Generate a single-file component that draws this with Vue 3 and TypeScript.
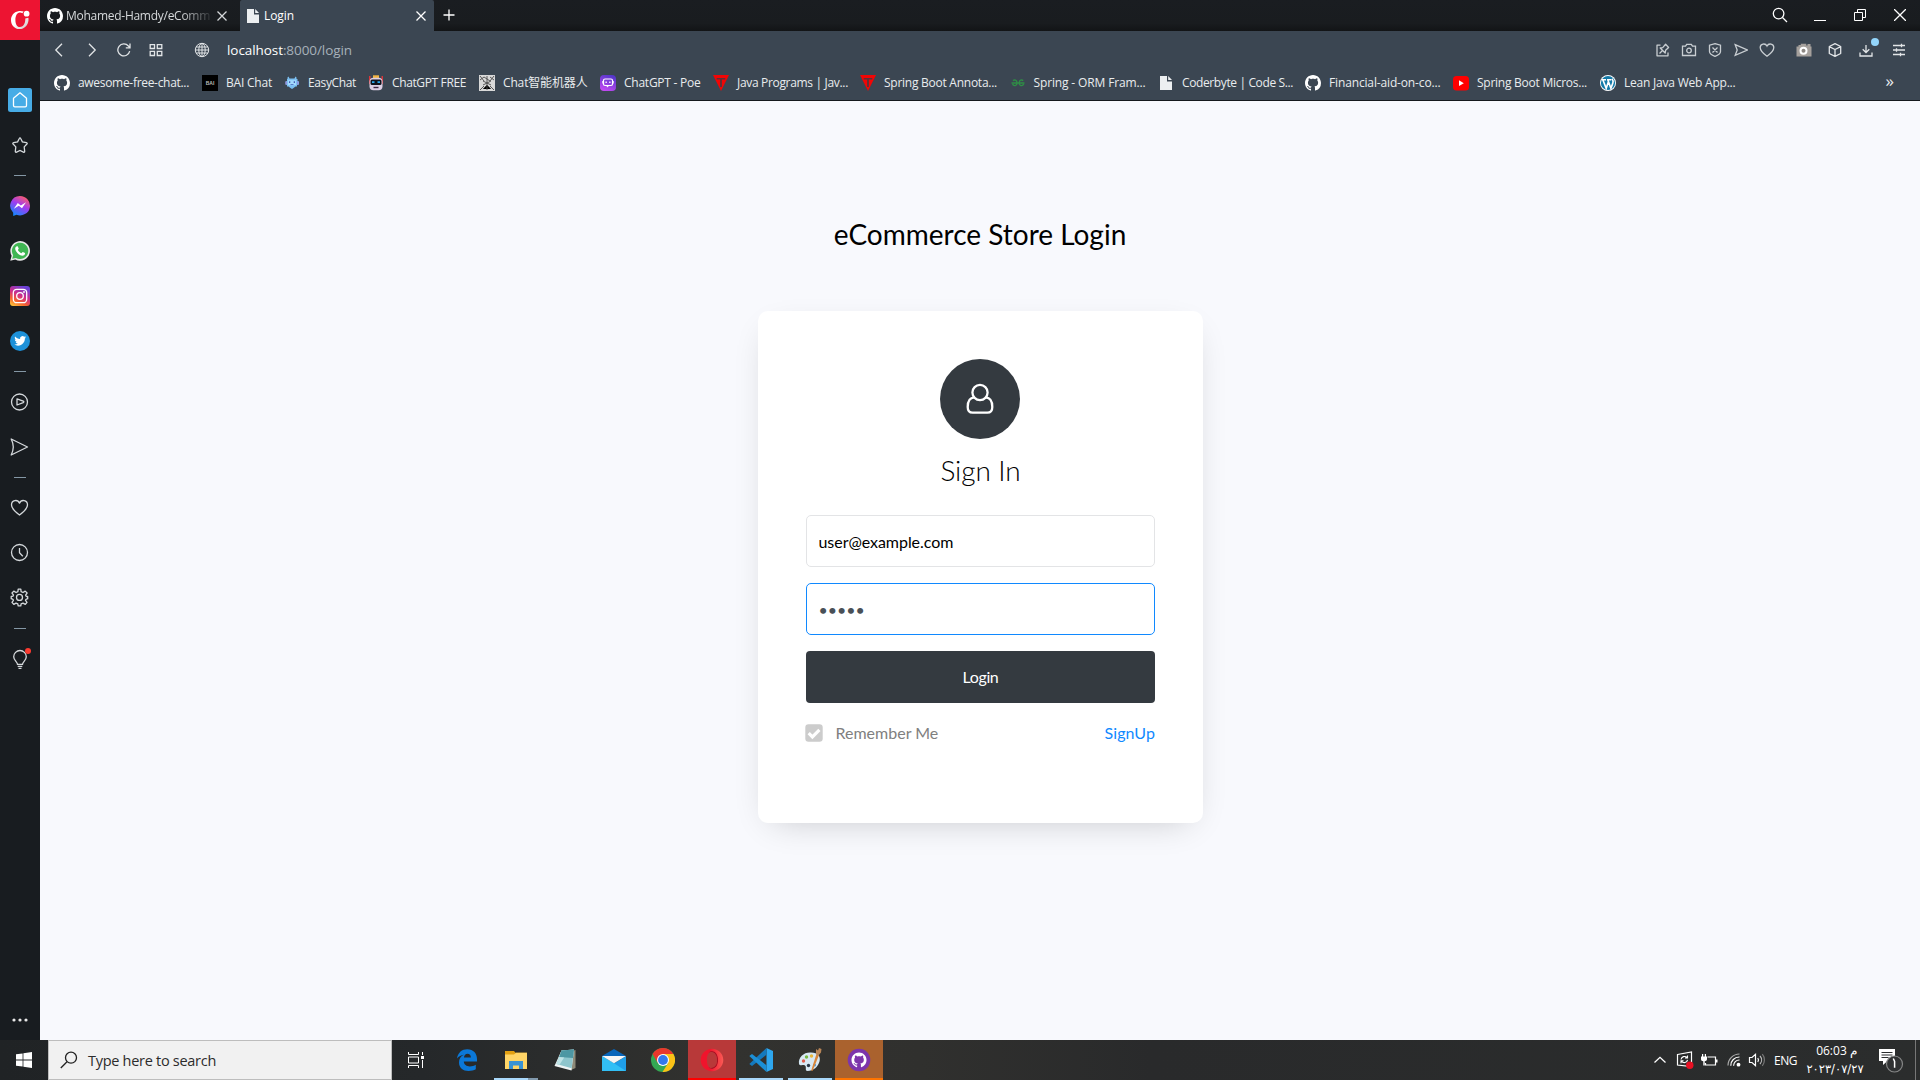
<script setup lang="ts">
import { ref, type Directive } from 'vue'

interface Glyph {
  box: string
  w: number
  h?: number
  body: string
}

const octocat =
  'M8 0C3.58 0 0 3.58 0 8c0 3.54 2.29 6.53 5.47 7.59.4.07.55-.17.55-.38 0-.19-.01-.82-.01-1.49-2.01.37-2.53-.49-2.69-.94-.09-.23-.48-.94-.82-1.13-.28-.15-.68-.52-.01-.53.63-.01 1.08.58 1.23.82.72 1.21 1.87.87 2.33.66.07-.52.28-.87.51-1.07-1.78-.2-3.64-.89-3.64-3.95 0-.87.31-1.59.82-2.15-.08-.2-.36-1.02.08-2.12 0 0 .67-.21 2.2.82.64-.18 1.32-.27 2-.27s1.36.09 2 .27c1.53-1.04 2.2-.82 2.2-.82.44 1.1.16 1.92.08 2.12.51.56.82 1.27.82 2.15 0 3.07-1.87 3.75-3.65 3.95.29.25.54.73.54 1.48 0 1.07-.01 1.93-.01 2.2 0 .21.15.46.55.38A8.01 8.01 0 0 0 16 8c0-4.42-3.58-8-8-8z'
const bird =
  'M23.953 4.57a10 10 0 01-2.825.775 4.958 4.958 0 002.163-2.723c-.951.555-2.005.959-3.127 1.184a4.92 4.92 0 00-8.384 4.482C7.69 8.095 4.067 6.13 1.64 3.162a4.822 4.822 0 00-.666 2.475c0 1.71.87 3.213 2.188 4.096a4.904 4.904 0 01-2.228-.616v.06a4.923 4.923 0 003.946 4.827 4.996 4.996 0 01-2.212.085 4.936 4.936 0 004.604 3.417 9.867 9.867 0 01-6.102 2.105c-.39 0-.779-.023-1.17-.067a13.995 13.995 0 007.557 2.209c9.053 0 13.998-7.496 13.998-13.985 0-.21 0-.42-.015-.63A9.935 9.935 0 0024 4.59z'

const line = (d: string, extra = '') =>
  `<path d="${d}" fill="none" stroke="currentColor" stroke-width="1.3" ${extra}/>`

const icons: Record<string, Glyph> = {
  operaLogo: {
    box: '0 0 20 20', w: 20,
    body: `<defs><linearGradient id="lg" x1="0" y1="0" x2="1" y2="1"><stop offset=".45" stop-color="#fff"/><stop offset="1" stop-color="#c9c0c2"/></linearGradient></defs>
      <path d="M13.7 1.6C11.9.9 10 .8 8.2 1.2 3.800 2 1 5.700 1 10.200 1 15.200 4.700 19 9.500 19c5 0 8.600-3.800 9-8.800.1-1.300 0-1.900-.2-2.400l-3 .7c.2 3.500-1.100 8.600-5.600 8.600-2.700 0-4.300-3.200-4.300-7.100 0-4.500 1.900-7.600 4.500-7.600 1 0 1.800.3 2.400.8z" fill="url(#lg)"/><circle cx="16.600" cy="3.700" r="2.900" fill="#fff"/>`,
  },
  github: { box: '0 0 16 16', w: 16, body: `<path fill="#fff" d="${octocat}"/>` },
  file: {
    box: '0 0 16 16', w: 16,
    body: '<path fill="#eceff1" d="M2 1h7v5.500h5V15H2z"/><path fill="#eceff1" d="M10.200 1L14 5h-3.800z"/>',
  },
  close: { box: '0 0 12 12', w: 12, body: line('M1.500 1.500l9 9m0-9l-9 9') },
  plus: { box: '0 0 12 12', w: 12, body: line('M6 .5v11M.5 6h11') },
  search: { box: '0 0 16 16', w: 16, body: line('M10.500 10.500l4.500 4.500') + '<circle cx="6.600" cy="6.600" r="5.300" fill="none" stroke="currentColor" stroke-width="1.3"/>' },
  minimize: { box: '0 0 12 12', w: 12, body: '<path d="M0 11h12v1H0z" fill="currentColor"/>' },
  restore: { box: '0 0 12 12', w: 12, body: '<path d="M.5 3.500h8v8h-8zM3.500 3.500v-3h8v8h-3" fill="none" stroke="currentColor" stroke-width="1"/>' },
  closeWin: { box: '0 0 12 12', w: 12, body: line('M0 0l12 12M12 0L0 12') },
  back: { box: '0 0 14 14', w: 14, body: line('M10 .8L3.800 7l6.200 6.200') },
  forward: { box: '0 0 14 14', w: 14, body: line('M4 .8L10.200 7 4 13.200') },
  reload: { box: '0 0 14 14', w: 14, body: line('M12.700 8.200A6 6 0 1 1 11.400 3l1.400 1.400M13 .6v4.200H8.800') },
  dial: {
    box: '0 0 14 14', w: 14,
    body: line('M1.200 1.700h4.300v3.800H1.200zM8.300 1.700h4.500v3.800H8.300zM1.200 8.300h4.300v4.200H1.200zM8.300 8.300h4.500v4.200H8.300z'),
  },
  globe: {
    box: '0 0 16 16', w: 16,
    body: '<g fill="none" stroke="currentColor" stroke-width="1"><circle cx="8" cy="8" r="6.700"/><ellipse cx="8" cy="8" rx="3.200" ry="6.700"/><path d="M8 1.300v13.400M2 5h12M2 11h12M1.300 8h13.400"/></g>',
  },
  pin: { box: '0 0 14 14', w: 14, body: line('M4.500 2.200H1v10.600h11V9.500M3.500 10.500l3-3M4.200 5l5 5 .4-2.700 3-2.800-3-3.200-2.900 3.300z', 'stroke-linejoin="round"') },
  camera: { box: '0 0 16 14', w: 16, h: 14, body: line('M1.500 3.200h3l1.200-1.800h4.600l1.200 1.800h3v9.300h-13z') + '<circle cx="8" cy="7.500" r="2.300" fill="none" stroke="currentColor" stroke-width="1.300"/>' },
  shield: { box: '0 0 14 14', w: 14, body: line('M7 .7l5.500 1.500v6.300c0 2-2.500 3.800-5.500 4.900-3-1.100-5.500-2.900-5.500-4.900V2.200zM4.500 4.500l5 5M9.500 4.500l-5 5') },
  sendSm: { box: '0 0 14 14', w: 14, body: line('M1.200 1.700L13.300 7 1.200 12.300 3.200 7z') },
  heartSm: { box: '0 0 16 16', w: 16, body: line('M8 14.300C4 11.500 1.200 8.700 1.200 5.600 1.200 1.600 6.300.8 8 4c1.700-3.200 6.800-2.400 6.800 1.600 0 3.100-2.800 5.900-6.800 8.700z') },
  snap: { box: '0 0 16 14', w: 16, h: 14, body: '<path d="M.5 3.500h2V2h2.300V.8h5.500V2.500h1.200V1h3v2.500h1v10H.5z" fill="#a5a09c"/><circle cx="7.500" cy="7.800" r="4" fill="#fff"/><circle cx="7.500" cy="7.800" r="2" fill="#8d8883"/>' },
  cube: { box: '0 0 14 14', w: 14, body: line('M7 .7l5.700 2.800v7L7 13.400l-5.700-2.900v-7zM1.300 3.600L7 6.500l5.700-2.900M7 6.500v6.800', 'stroke-linejoin="round"') },
  download: { box: '0 0 14 14', w: 14, body: line('M7 2v7.300M3.700 6.300L7 9.500l3.300-3.200M1 9.500v3.500h12V9.500') },
  sliders: { box: '0 0 14 14', w: 14, body: line('M1 2.500h12M1 7h12M1 11.500h12M9.500.8v3.400M4.500 5.300v3.400M8.500 9.800v3.400') },
  bai: { box: '0 0 16 16', w: 16, body: '<path d="M0 0h16v16H0z" fill="#000"/><text x="8" y="9.800" font-size="5" font-weight="700" fill="#bbb" text-anchor="middle" font-family="Liberation Sans, sans-serif">BAI</text>' },
  easy: { box: '0 0 16 16', w: 16, body: '<path d="M3.500 2.500l1-1 1 2h5l1-2 1 1V4h1v2l1.500.5v3L13 10v1.500h-1.500L9.500 13 8 14l-1.500-1-2-1.500H3V10l-1.500-.5v-3L3 6V4h.5z" fill="#7cc0f2"/><path d="M4 5.200h8v5H4z" fill="#a3dafd"/><path d="M5 6.300h1.300v1.700H5zM9.700 6.300H11v1.700H9.700zM6.500 9.200h3v.9h-3z" fill="#455fb4"/><path d="M1.500 6.500h1.300v3H1.500zM13.200 6.500h1.300v3h-1.300z" fill="#9c86d8"/>' },
  robot: { box: '0 0 16 16', w: 16, body: '<path d="M1 1h1.500v3h11V1H15v8H1z" fill="#d8363a"/><path d="M5 .3h6v3H5z" fill="#f2b544"/><rect x="1.500" y="2.800" width="13" height="12.400" rx="4" fill="#dccfe4"/><rect x="2.500" y="4.500" width="11" height="5.500" rx="1.500" fill="#10131d"/><path d="M4 6.300h2.500v1.800H4zM9.500 6.300H12v1.800H9.500z" fill="#2aa9ef"/><path d="M5.500 11.800h5v1.400h-5z" fill="#3a2742"/>' },
  aichat: { box: '0 0 16 16', w: 16, body: '<path d="M0 0h16v16H0z" fill="#d9d9d9"/><path d="M1 1l4 5M15 1l-4 5M1 15l4-4M15 15l-4-4M8 1v14M5 2l6 4M4 6l8 4M12 6l-8 4M4 14l4-4 4 4M1 5l4-3M15 5l-4-3" stroke="#4a4a4a" stroke-width=".9"/>' },
  poe: { box: '0 0 16 16', w: 16, body: '<defs><linearGradient id="pg" x1=".7" y1="0" x2=".3" y2="1"><stop stop-color="#5236c9"/><stop offset="1" stop-color="#c44af4"/></linearGradient></defs><rect width="16" height="16" rx="4" fill="url(#pg)"/><rect x="3.500" y="4" width="9" height="6.500" rx="1.500" fill="none" stroke="#fff" stroke-width="1.200"/><path d="M2.300 6h1.200v2.500H2.300zM12.500 6h1.200v2.500h-1.200zM6.500 10.500h3l-2.500 2z" fill="#fff"/><path d="M5.500 6.500h1.300v1.500H5.500zM9.200 6.500h1.300v1.500H9.200z" fill="#fff"/>' },
  techTri: { box: '0 0 16 16', w: 16, body: '<path d="M0 0h16L8 16z" fill="#f20505"/><path d="M3.700 3h8.600v1.400H8.900V12H7.100V4.400H3.700z" fill="#59323a"/>' },
  geeks: { box: '0 0 16 16', w: 16, body: '<path d="M3 5.600c1.500-1.300 4-.7 4 2.300s-3 3.700-4.600 1.300M9.200 7.900c0-3 2.500-3.600 4-2.300M13.800 9.200c-1.600 2.400-4.600 1.700-4.600-1.300M1.500 8h13" fill="none" stroke="#2f8d46" stroke-width="1.400"/>' },
  youtube: { box: '0 0 16 16', w: 16, body: '<rect y="1" width="16" height="14.500" rx="3.500" fill="#f00"/><path d="M6 5.300L10.800 8.200 6 11z" fill="#fff"/>' },
  wordpress: { box: '0 0 16 16', w: 16, body: '<circle cx="8" cy="8" r="8" fill="#fff"/><circle cx="8" cy="8" r="7.100" fill="#1279a8"/><path d="M2 4.800h4M7 4.800h4.200M2.900 5l3.300 8.300L8.300 7M7.900 5l3 8.300 2-5.400c.6-1.700.2-2.700-.9-4.200" fill="none" stroke="#fff" stroke-width="1.600"/>' },
  home: { box: '0 0 24 24', w: 24, body: '<rect width="24" height="24" rx="2.500" fill="#47ace6"/><path d="M5.500 10.200L12 4.800l6.500 5.400v7.300q0 1.300-1.300 1.300H6.800q-1.300 0-1.300-1.300z" fill="none" stroke="#fff" stroke-width="1.300" stroke-linejoin="round"/>' },
  star: { box: '0 0 24 24', w: 24, body: line('M12 4.800q.4 0 .7.800l1.700 3.300 4 .7q1.300.4.500 1.400l-2.700 2.900.5 4.500q-.1 1.200-1.300.7L12 17.500l-3.400 1.600q-1.200.5-1.300-.7l.5-4.500-2.700-2.900q-.8-1 .5-1.400l4-.7 1.700-3.300q.3-.8.700-.8z') },
  messenger: { box: '0 0 20 20', w: 20, body: '<defs><linearGradient id="mg" x1=".75" y1="0" x2=".2" y2="1"><stop stop-color="#ff5f66"/><stop offset=".45" stop-color="#a13bf0"/><stop offset="1" stop-color="#0a8cff"/></linearGradient></defs><path d="M10 0a10 9.700 0 1 1-3.500 18.800L3.200 20v-3.300A9.700 9.700 0 0 1 10 0z" fill="url(#mg)"/><path d="M3.800 12.700l4-5.700 3 2.500L16 6.300l-4 6-3.200-2.500z" fill="#fff"/>' },
  whatsapp: { box: '0 0 20 20', w: 20, body: '<path d="M.3 19.700l1.300-5A9.800 9.800 0 1 1 5.300 18.400z" fill="#e9e9e9"/><path d="M2.200 17.800l1-3.500a8.200 8.200 0 1 1 2.700 2.600z" fill="#40b653"/><path d="M7.200 5.200c.5 0 .6.200 1.500 2.400.1.400-.9 1.300-.7 1.600.9 1.500 2 2.400 3.400 3 .4 0 1-1.200 1.400-1.200.5.100 2.300 1 2.300 1.200.1 1.600-1.200 2.500-2.800 2.500C9.200 14.600 5.200 10.700 5.200 7.600c0-1 .8-2.300 2-2.400z" fill="#fff"/>' },
  instagram: { box: '0 0 20 20', w: 20, body: '<defs><linearGradient id="ig" x1=".1" y1="1" x2=".6" y2="0"><stop stop-color="#ffca3a"/><stop offset=".3" stop-color="#f5632f"/><stop offset=".6" stop-color="#cf2c8b"/><stop offset="1" stop-color="#6b42d6"/></linearGradient></defs><rect width="20" height="20" rx="3" fill="url(#ig)"/><g fill="none" stroke="#fff" stroke-width="1.300"><rect x="3.300" y="3.300" width="13.400" height="13.400" rx="3.500"/><circle cx="10" cy="10" r="3.300"/></g><circle cx="14" cy="6" r=".9" fill="#fff"/>' },
  twitter: { box: '0 0 20 20', w: 20, body: `<circle cx="10" cy="10" r="10" fill="#1d91d9"/><path transform="translate(4.300 4) scale(.49)" d="${bird}" fill="#fff"/>` },
  play: { box: '0 0 24 24', w: 24, body: '<circle cx="11.500" cy="12" r="8" fill="none" stroke="currentColor" stroke-width="1.300"/>' + line('M9 8.800l6.200 2.300q1.300.7 0 1.500L9 15z', 'stroke-linejoin="round"') },
  send: { box: '0 0 24 24', w: 24, body: line('M3.200 4L19.500 12 3.200 20q2-4 2.100-8-.1-4-2.100-8z', 'stroke-linejoin="round"') },
  heart: { box: '0 0 24 24', w: 24, body: line('M11.500 19.100C6.700 15.500 3.500 12.700 3.500 9 3.500 3.800 9.800 3 11.500 7.200c1.700-4.200 8-3.400 8 1.800 0 3.700-3.200 6.500-8 10.100z', 'stroke-linejoin="round"') },
  clock: { box: '0 0 24 24', w: 24, body: '<circle cx="11.500" cy="11.500" r="8" fill="none" stroke="currentColor" stroke-width="1.300"/>' + line('M11.500 7v4.700l3.300 3.500') },
  gear: { box: '0 0 24 24', w: 24, body: '<g transform="translate(0 -.6)"><circle cx="11.500" cy="12" r="3" fill="none" stroke="currentColor" stroke-width="1.300"/>' + line('M9.900 6.200l.3-2.400h2.600l.3 2.400 1.900.9 2.200-1.400 1.900 1.900-1.500 2.100.6 1.200.9.300.6-.1v2.200l-1.700.6-.5 1 1.500 2-1.700 2.100-2.300-1.300-1.900.8-.3 2h-2.600l-.4-2-1.800-.8-2.200 1.300-1.800-2.100 1.400-2-.4-1-1.800-.6v-2.200l1.800-.3.5-1.100-1.500-2.100 1.800-1.900 2.300 1.400z', 'stroke-linejoin="round"') + '</g>' },
  bulb: { box: '0 0 24 24', w: 24, body: line('M9.500 17.300c0-2.300-3.800-4-3.800-7.500a6.300 6.300 0 0 1 12.600 0c0 3.500-3.800 5.200-3.800 7.500zM9.700 19.300h4.600M10.500 21.300h3') + '<circle cx="20" cy="4" r="3" fill="#fb3b30"/>' },
  dots: { box: '0 0 24 24', w: 24, body: '<g fill="#e8e8e8"><circle cx="6" cy="12" r="1.600"/><circle cx="12" cy="12" r="1.600"/><circle cx="18" cy="12" r="1.600"/></g>' },
  person: { box: '0 0 28 32', w: 28, h: 32, body: '<g fill="none" stroke="#fff" stroke-width="2.300"><circle cx="14" cy="9.500" r="7.600"/><path d="M8.200 14.300C4 14.600 1.700 18.500 1.700 24c0 3.600 2 5.700 5 5.700h14.600c3 0 5-2.100 5-5.700 0-5.500-2.300-9.400-6.500-9.700"/></g>' },
  checkbox: { box: '0 0 18 18', w: 18, body: '<rect x=".3" y=".3" width="17.400" height="17.400" rx="3.200" fill="#ccc"/><path d="M3.700 9.200l3.700 3.700 7-7" fill="none" stroke="#fff" stroke-width="3.200"/>' },
  windows: { box: '0 0 16 16', w: 16, body: '<path fill="#fff" d="M0 2.300L6.600 1.400v6.200H0zM7.400 1.300L16 0v7.600H7.400zM0 8.400h6.600v6.200L0 13.700zM7.400 8.400H16V16l-8.600-1.300z"/>' },
  winSearch: { box: '0 0 18 18', w: 18, body: '<g fill="none" stroke="#222" stroke-width="1.300"><circle cx="11" cy="6.700" r="5.500"/><path d="M7 10.700L.8 17"/></g>' },
  taskview: { box: '0 0 16 16', w: 16, body: '<path d="M.5 0v2.500h10V0M.5 16v-2.500h10V16M.5 5h10v6H.5zM14.500 0v3M14.500 8v8" fill="none" stroke="#fff"/><path d="M13 4h3v3h-3z" fill="#fff"/>' },
  edge: { box: '0 0 20 22', w: 20, h: 22, body: '<path d="M0 9.500C1 3.300 5 .2 10.200.2 16.500.2 20 4.500 20 10v2.600H6.800c.1 3.200 2.800 4.800 6 4.800 2.400 0 4.300-.6 6-1.700v4.500c-1.900 1.100-4.400 1.700-7.200 1.700C6 21.900 2 18.700 2 13.400c0-3.400 1.700-6.200 4.900-7.600-2.800.3-5.100 1.500-6.900 3.700zm6.900-.9h7c0-2.500-1.300-3.900-3.400-3.900-2 0-3.200 1.500-3.600 3.900z" fill="#0b78d8"/>' },
  explorer: { box: '0 0 22 18', w: 22, h: 18, body: '<path d="M0 0h9l1.500 1.700H22V18H0z" fill="#e2a012"/><path d="M0 3.600h9l2-1.900h11V18H0z" fill="#ffd567"/><path d="M4 18v-8h14v8h-4v-3.500H8V18z" fill="#3a93d4"/>' },
  notepad: { box: '0 0 22 22', w: 22, body: '<path d="M18 2l3.500-1v18L17 21z" fill="#8d8a78"/><path d="M7.500 1.500L20 .5l-2.500 21L.5 17z" fill="#eef4f4"/><path d="M7.500 1.500L20 .5l-2.300 18.800L2.500 15z" fill="#8ec6cd"/><path d="M7.500 1.500L20 .5l-1 8.500L5.200 8z" fill="#4d97a3"/><path d="M5.200 8l5 .4L5.500 15.800 2.500 15z" fill="#bfe3e6"/>' },
  mail: { box: '0 0 24 22', w: 24, h: 22, body: '<path d="M0 7L12 0l12 7-4 3H4z" fill="#0865ba"/><path d="M0 7.300l12 6.900 12-6.900V22H0z" fill="#1f9ee8"/><path d="M0 7.300V22h24L12 14.200z" fill="#32bff5"/><path d="M0 7h24l-12 7.200z" fill="#f5f5f5"/>' },
  chrome: { box: '0 0 24 24', w: 24, body: '<circle cx="12" cy="12" r="12" fill="#34a853"/><path d="M1.600 6A12 12 0 0 1 22.400 6H12L6.800 15z" fill="#e8372c"/><path d="M22.400 6A12 12 0 0 1 11.500 24L17.200 15 12 6z" fill="#fbc116"/><circle cx="12" cy="12" r="6" fill="#fff"/><circle cx="12" cy="12" r="4.900" fill="#3378ec"/>' },
  opera: { box: '0 0 24 24', w: 24, body: '<defs><linearGradient id="og" x1="0" x2="1"><stop offset=".4" stop-color="#f0142c"/><stop offset="1" stop-color="#fb5a55"/></linearGradient></defs><path fill-rule="evenodd" d="M12 .8c6.300 0 11.300 5 11.300 11.200s-5 11.200-11.300 11.200S.7 18.200.7 12 5.700.8 12 .8zm0 2.800c-3.500 0-5.100 3.900-5.100 8.400s1.600 8.400 5.100 8.400 5.100-3.900 5.100-8.400S15.500 3.600 12 3.600z" fill="url(#og)"/><path d="M8.500 4.800c4-3.500 9.500-.5 9.500 7.200s-5.500 10.700-9.500 7.200c1.200 1.200 8.600 2.200 8.600-7.200S9.700 3.600 8.500 4.800z" fill="#a30c20"/>' },
  vscode: { box: '0 0 24 24', w: 24, body: '<path d="M17.500 0L24 3v18l-6.500 3z" fill="#2ea7ef"/><path d="M17.500 0v6.800L3 18 .3 16z" fill="#1479bd"/><path d="M17.500 24v-6.800L3 6 .3 8z" fill="#1b8fd6"/>' },
  paint: { box: '0 0 24 24', w: 24, body: '<path d="M1 16C0 9 6 4 13 4.500c7 0 10 4 8.500 9-1.300 5-6 9.500-12 9.500-2.700 0-1-3-2-5-1.500-2.300-5 1-6.500-2z" fill="#d7e8f3"/><circle cx="5.500" cy="13" r="1.700" fill="#df5d4b"/><circle cx="8.500" cy="9" r="1.700" fill="#76b843"/><circle cx="13.500" cy="8" r="1.700" fill="#eab73a"/><circle cx="10.500" cy="17.500" r="1.700" fill="#293647"/><circle cx="16.500" cy="17" r="1.500" fill="#4394d9"/><path d="M18.300 6.500l2.500 1L14.500 23l-1.300-.5z" fill="#d9863a"/><path d="M18 6.500L18 1l2 1.500L21 0l2.500 1-.5 3.500-2.500 3z" fill="#b98557"/>' },
  ghDesktop: { box: '0 0 24 24', w: 24, body: `<circle cx="12" cy="12" r="11.300" fill="#7c35ab"/><path transform="translate(4.500 4.500) scale(.94)" d="${octocat}" fill="#fff"/>` },
  chevron: { box: '0 0 14 14', w: 14, body: '<path d="M1.500 9.500L7 4.300l5.500 5.200" fill="none" stroke="#fff" stroke-width="1.300"/>' },
  sync: { box: '0 0 18 18', w: 18, body: '<path d="M1.500 3.500l14-2.500v14.500l-14-1.500z" fill="none" stroke="#fff" stroke-width="1.200"/><path d="M5 8.500c.5-3 4-4 6-2m.5-2v2.500H9M11.500 8.800c-.5 3-4 3.700-6 1.500m-.5 2V9.800h2.500" fill="none" stroke="#fff" stroke-width="1.100"/><circle cx="13.800" cy="14.200" r="3.700" fill="#e81123"/>' },
  battery: { box: '0 0 18 16', w: 18, h: 16, body: '<path d="M7.500 5h8v8H5.500v-2" fill="none" stroke="#fff" stroke-width="1.200"/><path d="M16 7.500h1.500v3H16zM1 4.500h6v2.800C7 8.600 5.800 9.300 4.700 9.300v4.300h-1.400V9.300C2 9.300 1 8.600 1 7.300zM2 2h1.200v3H2zM4.800 2H6v3H4.800z" fill="#fff"/>' },
  wifi: { box: '0 0 14 14', w: 14, body: '<g fill="none" stroke-width="1.200"><path d="M1 12.500A11.500 11.500 0 0 1 12.500 1" stroke="#aaa"/><path d="M3.800 12.800A8.500 8.500 0 0 1 12.500 4M6.600 12.800a5.700 5.700 0 0 1 5.900-5.800" stroke="#fff"/></g><circle cx="11.500" cy="11.700" r="1.900" fill="#fff"/>' },
  volume: { box: '0 0 18 16', w: 18, h: 16, body: '<g fill="none" stroke="#fff" stroke-width="1.200"><path d="M1.500 5.500H4l3.500-3.200v11.400L4 10.500H1.500zM9.800 6a3.500 3.500 0 0 1 0 4"/><path d="M12 4a6 6 0 0 1 0 8" stroke="#bbb"/><path d="M14.300 2.200a9 9 0 0 1 0 11.600" stroke="#777"/></g>' },
  notice: { box: '0 0 26 26', w: 26, body: '<path d="M1 2h16v12H9.500L5 18v-4H1z" fill="#fff"/><path d="M3.500 5.500h11M3.500 8h11M3.500 10.500h7" stroke="#2b2d2e"/><circle cx="16.500" cy="17" r="8" fill="#303233" stroke="#858686" stroke-width="1.200"/><path d="M15.300 11.500l1.300 3v6.300" fill="none" stroke="#fff" stroke-width="1.500"/>' },
}

interface Bookmark { icon: string; label: string; pitch: number; width: number }
const bookmarks: Bookmark[] = [
  { icon: 'github', label: 'awesome-free-chat...', pitch: 148, width: 111 },
  { icon: 'bai', label: 'BAI Chat', pitch: 82, width: 46 },
  { icon: 'easy', label: 'EasyChat', pitch: 84, width: 48 },
  { icon: 'robot', label: 'ChatGPT FREE', pitch: 111, width: 74 },
  { icon: 'aichat', label: 'Chat智能机器人', pitch: 121, width: 84.5 },
  { icon: 'poe', label: 'ChatGPT - Poe', pitch: 113, width: 76.5 },
  { icon: 'techTri', label: 'Java Programs | Jav...', pitch: 147, width: 111 },
  { icon: 'techTri', label: 'Spring Boot Annota...', pitch: 149.5, width: 113 },
  { icon: 'geeks', label: 'Spring - ORM Fram...', pitch: 148.5, width: 112 },
  { icon: 'file', label: 'Coderbyte | Code S...', pitch: 147, width: 111 },
  { icon: 'github', label: 'Financial-aid-on-co...', pitch: 148, width: 111.5 },
  { icon: 'youtube', label: 'Spring Boot Micros...', pitch: 147, width: 110 },
  { icon: 'wordpress', label: 'Lean Java Web App...', pitch: 147, width: 111.5 },
]

const rail = ['home', 'star', '-', 'messenger', 'whatsapp', 'instagram', 'twitter', '-', 'play', 'send', '-', 'heart', 'clock', 'gear', '-', 'bulb']
const navIcons = [['back', 33], ['forward', 33], ['reload', 32], ['dial', 31]] as const
const pageTools = [['pin', 26], ['camera', 26], ['shield', 26], ['sendSm', 26], ['heartSm', 26]] as const
const extTools = [['snap', 30], ['cube', 31], ['download', 32], ['sliders', 34]] as const
const windowTools = ['search', 'minimize', 'restore', 'closeWin']
const apps = [
  { icon: 'edge', state: '' },
  { icon: 'explorer', state: 'open multi' },
  { icon: 'notepad', state: '' },
  { icon: 'mail', state: '' },
  { icon: 'chrome', state: '' },
  { icon: 'opera', state: 'opera' },
  { icon: 'vscode', state: 'open' },
  { icon: 'paint', state: 'open' },
  { icon: 'ghDesktop', state: 'alert' },
]
const tray = [['chevron', 24], ['sync', 25], ['battery', 24], ['wifi', 25], ['volume', 22]] as const

const email = ref('user@example.com')
const password = ref('admin')

// Spreads a label over its given width through letter spacing.
const vFit: Directive<HTMLElement, number> = {
  mounted(el, { value }) {
    el.style.letterSpacing = '0px'
    const natural = el.getBoundingClientRect().width
    const count = Array.from(el.textContent ?? '').length
    if (count) el.style.letterSpacing = `${(value - natural) / count}px`
  },
}
const svgAttrs = (name: string) => {
  const g = icons[name]
  return { viewBox: g.box, width: g.w, height: g.h ?? g.w }
}
</script>

<template>
  <div class="desktop">
    <div class="browser">
      <aside class="rail">
        <div class="rail-logo"><svg v-bind="svgAttrs('operaLogo')" v-html="icons.operaLogo.body" /></div>
        <nav class="rail-items">
          <template v-for="(name, i) in rail" :key="i">
            <span v-if="name === '-'" class="rail-sep"><i /></span>
            <span v-else class="rail-item"><svg v-bind="svgAttrs(name)" v-html="icons[name].body" /></span>
          </template>
        </nav>
        <div class="rail-more"><svg v-bind="svgAttrs('dots')" v-html="icons.dots.body" /></div>
      </aside>

      <div class="window">
        <header class="tabs">
          <div class="tab">
            <svg v-bind="svgAttrs('github')" v-html="icons.github.body" />
            <div class="tab-title fade"><span v-fit="144">Mohamed-Hamdy/eComm</span></div>
            <svg class="tab-close" v-bind="svgAttrs('close')" v-html="icons.close.body" />
          </div>
          <div class="tab active">
            <svg v-bind="svgAttrs('file')" v-html="icons.file.body" />
            <div class="tab-title"><span v-fit="30">Login</span></div>
            <svg class="tab-close" v-bind="svgAttrs('close')" v-html="icons.close.body" />
          </div>
          <svg class="new-tab" v-bind="svgAttrs('plus')" v-html="icons.plus.body" />
          <div class="win-tools">
            <span v-for="name in windowTools" :key="name" :class="name"><svg v-bind="svgAttrs(name)" v-html="icons[name].body" /></span>
          </div>
        </header>

        <div class="address">
          <span v-for="[name, w] in navIcons" :key="name" class="cell" :style="{ width: w + 'px' }"><svg v-bind="svgAttrs(name)" v-html="icons[name].body" /></span>
          <svg class="globe" v-bind="svgAttrs('globe')" v-html="icons.globe.body" />
          <span v-fit="125" class="url"><b>localhost</b>:8000/login</span>
          <div class="tools">
            <span v-for="[name, w] in pageTools" :key="name" class="cell dim" :style="{ width: w + 'px' }"><svg v-bind="svgAttrs(name)" v-html="icons[name].body" /></span>
          </div>
          <div class="ext">
            <span v-for="[name, w] in extTools" :key="name" class="cell" :class="name" :style="{ width: w + 'px' }"><svg v-bind="svgAttrs(name)" v-html="icons[name].body" /></span>
          </div>
        </div>

        <div class="bookmarks">
          <div v-for="(b, i) in bookmarks" :key="i" class="bookmark" :style="{ width: b.pitch + 'px' }">
            <svg v-bind="svgAttrs(b.icon)" v-html="icons[b.icon].body" />
            <span v-fit="b.width">{{ b.label }}</span>
          </div>
          <span class="overflow">»</span>
        </div>

        <main class="page">
          <h2>eCommerce Store Login</h2>
          <section class="card">
            <div class="avatar"><svg v-bind="svgAttrs('person')" v-html="icons.person.body" /></div>
            <h3>Sign In</h3>
            <form @submit.prevent>
              <input v-model="email" type="text" class="field" />
              <input v-model="password" type="password" class="field focused" />
              <button type="submit">Login</button>
              <div class="options">
                <label><svg v-bind="svgAttrs('checkbox')" v-html="icons.checkbox.body" /><span>Remember Me</span></label>
                <a>SignUp</a>
              </div>
            </form>
          </section>
        </main>
      </div>
    </div>

    <footer class="taskbar">
      <div class="start"><svg v-bind="svgAttrs('windows')" v-html="icons.windows.body" /></div>
      <div class="search-box">
        <svg v-bind="svgAttrs('winSearch')" v-html="icons.winSearch.body" />
        <span v-fit="128">Type here to search</span>
      </div>
      <div class="task-view"><svg v-bind="svgAttrs('taskview')" v-html="icons.taskview.body" /></div>
      <div class="apps">
        <div v-for="a in apps" :key="a.icon" class="app" :class="a.state"><svg v-bind="svgAttrs(a.icon)" v-html="icons[a.icon].body" /></div>
      </div>
      <div class="tray">
        <span v-for="[name, w] in tray" :key="name" class="cell" :style="{ width: w + 'px' }"><svg v-bind="svgAttrs(name)" v-html="icons[name].body" /></span>
        <div class="lang"><span v-fit="23">ENG</span></div>
        <div class="clock"><span v-fit="37" class="time">06:03 م</span><span v-fit="58" class="date">٢٠٢٣/٠٧/٢٧</span></div>
        <svg class="notice" v-bind="svgAttrs('notice')" v-html="icons.notice.body" />
        <i class="peek" />
      </div>
    </footer>
  </div>
</template>

<style>
body { margin: 0; overflow: hidden; }
</style>

<style scoped>
* { box-sizing: border-box; }
svg { display: block; flex: none; }
.desktop {
  width: 1920px; height: 1080px; display: flex; flex-direction: column; overflow: hidden;
  font-family: "Open Sans", "Noto Sans", "Noto Sans CJK SC", sans-serif; font-size: 12px; color: #e9ecee;
}
.browser { display: flex; height: 1040px; }
.rail { width: 40px; background: #181c20; display: flex; flex-direction: column; color: #d4d8db; }
.rail-logo { height: 40px; background: #ed1432; display: flex; align-items: center; justify-content: center; }
.rail-items { flex: 1; padding-top: 37.5px; }
.rail-item { height: 45px; display: flex; align-items: center; justify-content: center; }
.rail-sep { height: 16px; display: flex; align-items: center; justify-content: center; }
.rail-sep i { width: 12px; height: 1px; background: #8497a5; }
.rail-more { height: 40px; display: flex; align-items: center; justify-content: center; }

.window { width: 1880px; display: flex; flex-direction: column; }
.tabs { height: 31px; background: linear-gradient(#1a1d21, #191c1f 75%, #121416); display: flex; }
.tab { width: 200px; height: 31px; display: flex; align-items: center; padding: 0 12px 0 7px; white-space: nowrap; color: #d5d8da; }
.tab.active { width: 194px; padding: 0 7px 0 5px; background: #3b4652; color: #fff; border-radius: 2px 2px 0 0; }
.tab-title { margin-left: 3px; width: 148px; }
.tab-title span { display: inline-block; }
.tab.active .tab-title { flex: 1; }
.fade { -webkit-mask-image: linear-gradient(90deg, #000 115px, transparent 148px); mask-image: linear-gradient(90deg, #000 115px, transparent 148px); }
.tab-close { margin-left: auto; }
.new-tab { margin: 9px 0 0 9px; color: #fff; }
.win-tools { margin-left: auto; display: flex; color: #fff; }
.win-tools span { width: 40px; display: flex; align-items: center; justify-content: center; }
.win-tools .search { padding-bottom: 2px; }
.win-tools .minimize, .win-tools .restore, .win-tools .closeWin { padding-bottom: 1px; }

.address { height: 38px; background: #3b4652; display: flex; align-items: center; padding: 0 4px 0 2px; color: #e2e5e7; }
.cell { display: flex; align-items: center; justify-content: center; flex: none; }
.globe { margin: 0 17px 0 23px; }
.url { font-size: 13.5px; color: #a7b1ba; white-space: nowrap; }
.url b { font-weight: 400; color: #fff; }
.tools { margin-left: auto; display: flex; }
.dim { color: #c9ced2; }
.ext { display: flex; margin-left: 9px; }
.download { position: relative; }
.download::after { content: ""; position: absolute; left: 21px; top: -5px; width: 8px; height: 8px; border-radius: 50%; background: #93d5fb; }

.bookmarks { height: 32px; background: #3b4652; border-bottom: 1px solid #15191d; display: flex; align-items: center; padding: 0 26px 3px 14px; }
.bookmark { height: 16px; display: flex; align-items: center; gap: 8px; flex: none; white-space: nowrap; }
.bookmark span { line-height: 16px; }
.overflow { margin-left: auto; font-size: 17px; line-height: 20px; padding-bottom: 5px; }

.page { flex: 1; background: #f8f9fd; display: flex; flex-direction: column; align-items: center; font-family: Lato, sans-serif; color: #000; }
h2 { margin: 112px 0 0; font-size: 28px; font-weight: 400; line-height: 42px; }
.card { width: 445px; height: 512px; margin: 56px 0 0 1px; padding: 48px; background: #fff; border-radius: 10px; box-shadow: 0 10px 34px -15px rgba(0, 0, 0, .24); }
.avatar { width: 80px; height: 80px; margin: 0 auto 0 134px; border-radius: 50%; background: #343a40; display: flex; align-items: center; justify-content: center; }
h3 { margin: 10px 0 0; font-size: 28px; font-weight: 300; line-height: 42px; letter-spacing: -.1px; text-align: center; }
form { margin-top: 24px; display: flex; flex-direction: column; gap: 16px; }
.field { height: 52px; width: 100%; border: 1px solid #e3e4e6; border-radius: 5px; padding: 1px 12px 0 11.5px; font: 16px Lato, sans-serif; letter-spacing: -.05px; color: #000; background: #fff; outline: none; }
.focused { border-color: #1089ff; color: #495057; }
button { height: 52px; border: 0; border-radius: 4px; background: #343a40; color: #fff; font: 16px Lato, sans-serif; letter-spacing: -.4px; padding: 0 0 1px; }
.options { display: flex; justify-content: space-between; align-items: center; height: 28px; font-size: 16px; }
.options label { display: flex; align-items: center; gap: 12.5px; margin-left: -1px; color: #808080; }
.options span, .options a { padding-bottom: 2px; }
.options a { color: #1089ff; letter-spacing: .1px; }

.taskbar { height: 40px; display: flex; background: linear-gradient(90deg, #202325, #25282a 22%, #32322f 38%, #30302e 48%, #292a2b 60%, #2b2d2d); }
.start { width: 48px; display: flex; align-items: center; justify-content: center; }
.search-box { width: 344px; background: #f1f1f1; border: 1px solid #bdbdbd; display: flex; align-items: center; gap: 10px; padding-left: 11px; color: #2c2c2c; font-size: 14.5px; white-space: nowrap; }
.task-view { width: 48px; margin-right: 3px; display: flex; align-items: center; justify-content: center; }
.apps { display: flex; gap: 1px; }
.app { width: 48px; height: 40px; display: flex; align-items: center; justify-content: center; border-bottom: 2px solid transparent; padding-top: 2px; }
.app.open { border-style: solid; border-width: 0 0 2px; border-image: linear-gradient(90deg, transparent 4px, #a9d8fa 4px 44px, transparent 44px) 2; }
.app.multi { border-image: linear-gradient(90deg, transparent 4px, #a9d8fa 4px 35px, #8199ac 35px 44px, transparent 44px) 2; }
.app.opera { background: #b83939; border-bottom-color: #f00; }
.app.alert { background: #aa622e; border-bottom-color: #ff7400; }
.tray { margin-left: auto; display: flex; align-items: center; font-size: 12px; color: #fff; }
.lang { width: 30px; margin-left: 6px; white-space: nowrap; }
.clock { width: 62px; height: 40px; display: flex; flex-direction: column; align-items: center; justify-content: center; line-height: 18px; white-space: nowrap; }
.clock span { direction: ltr; unicode-bidi: bidi-override; }
.clock .time { margin-left: 3px; }
.date { font-family: "DejaVu Sans", sans-serif; font-size: 11.5px; }
.notice { margin-left: 12px; }
.peek { width: 1px; height: 40px; margin: 0 4px 0 11px; background: #777; }
</style>
